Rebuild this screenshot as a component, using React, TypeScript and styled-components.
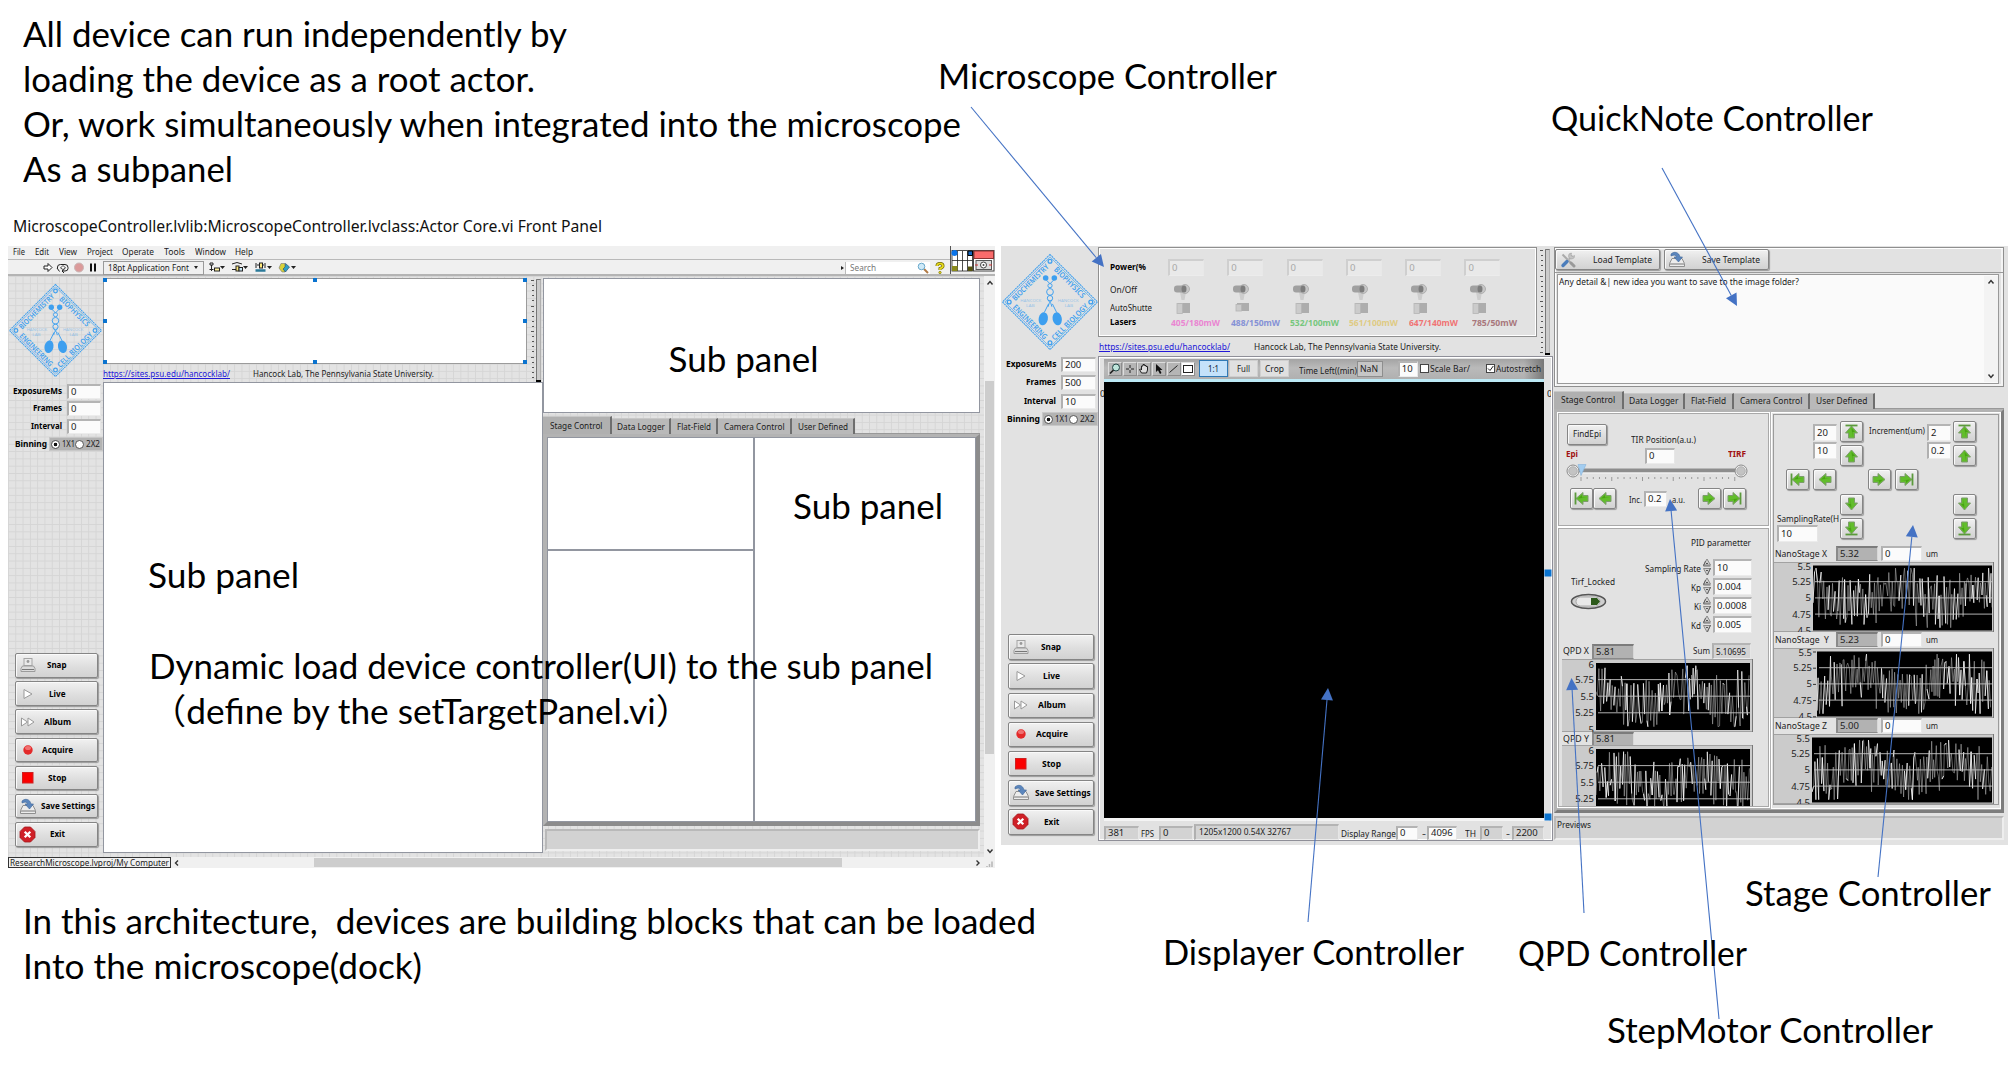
import React, { useLayoutEffect, useRef, useState } from 'react';
import styled, { createGlobalStyle, css } from 'styled-components';

const UI = '"Noto Sans", "Open Sans", "Noto Sans CJK SC", sans-serif';
const SLIDE = 'Lato, "Noto Sans CJK SC", sans-serif';

const Global = createGlobalStyle`
  * { box-sizing: border-box; }
  body { margin: 0; background: #fff; overflow: hidden; }
`;

/* ---------- text that is fitted to a given width ---------- */

const FitBox = styled.span<{ $w: number; $size: number; $bold?: boolean; $color?: string; $ml?: number; $mt?: number }>`
  display: block;
  flex: none;
  width: ${(p) => p.$w}px;
  margin-left: ${(p) => p.$ml ?? 0}px;
  margin-top: ${(p) => p.$mt ?? 0}px;
  font-size: ${(p) => p.$size}px;
  font-weight: ${(p) => (p.$bold ? 700 : 400)};
  color: ${(p) => p.$color ?? '#1c1c1c'};
  white-space: pre;
  line-height: inherit;
`;

const FitInner = styled.span<{ $under?: boolean }>`
  display: inline-block;
  transform-origin: 0 50%;
  text-decoration: ${(p) => (p.$under ? 'underline' : 'none')};
`;

type TProps = {
  w: number;
  size?: number;
  b?: boolean;
  c?: string;
  ml?: number;
  mt?: number;
  u?: boolean;
  children: React.ReactNode;
};

function T({ w, size = 9, b, c, ml, mt, u, children }: TProps) {
  const ref = useRef<HTMLSpanElement>(null);
  const [scale, setScale] = useState(1);
  useLayoutEffect(() => {
    if (!ref.current) return;
    const natural = parseFloat(getComputedStyle(ref.current).width);
    if (natural > 0) setScale(w / natural);
  }, [w, children]);
  return (
    <FitBox $w={w} $size={size} $bold={b} $color={c} $ml={ml} $mt={mt}>
      <FitInner ref={ref} $under={u} style={{ transform: `scaleX(${scale})` }}>
        {children}
      </FitInner>
    </FitBox>
  );
}

/* ---------- slide canvas ---------- */

const Slide = styled.main`
  position: relative;
  width: 2013px;
  height: 1076px;
  overflow: hidden;
  background: #fff;
  font-family: ${UI};
  line-height: 12px;
`;

const Note = styled.div<{ $x: number; $y: number }>`
  position: absolute;
  left: ${(p) => p.$x}px;
  top: ${(p) => p.$y - 35.5}px;
  font-family: ${SLIDE};
  line-height: 45px;
  display: flex;
  flex-direction: column;
`;

const WindowTitle = styled.div`
  position: absolute;
  left: 13px;
  top: 213px;
  line-height: 25px;
`;

const Overlay = styled.svg`
  position: absolute;
  left: 0;
  top: 0;
  pointer-events: none;
`;

/* ---------- shared widgets ---------- */

type Tone = 'white' | 'off' | 'ind' | 'gray';
const toneBg: Record<Tone, string> = { white: '#fbfbfb', off: '#e9e9e9', ind: '#b2b2b2', gray: '#d3d3d3' };

const FieldBox = styled.div<{ $w: number; $h: number; $tone: Tone; $ml: number; $mt: number }>`
  flex: none;
  width: ${(p) => p.$w}px;
  height: ${(p) => p.$h}px;
  margin-left: ${(p) => p.$ml}px;
  margin-top: ${(p) => p.$mt}px;
  background: ${(p) => toneBg[p.$tone]};
  border-style: solid;
  border-width: 2px 1px 1px 2px;
  border-color: ${(p) =>
    p.$tone === 'ind' ? '#7c7c7c #d8d8d8 #8a8a8a #8a8a8a' : p.$tone === 'off' ? '#cfcfcf #e8e8e8 #ececec #cfcfcf' : '#b4b4b4 #e6e6e6 #ececec #b0b0b0'};
  padding-left: 2px;
  display: flex;
  align-items: center;
  white-space: nowrap;
  font-size: 9.5px;
  line-height: 10px;
  color: ${(p) => (p.$tone === 'off' ? '#a8a8a8' : '#222')};
`;

function Field({ w, h = 15, tone = 'white', ml = 0, mt = 0, children }: { w: number; h?: number; tone?: Tone; ml?: number; mt?: number; children?: React.ReactNode }) {
  return (
    <FieldBox $w={w} $h={h} $tone={tone} $ml={ml} $mt={mt}>
      {children}
    </FieldBox>
  );
}

const raised = css`
  background: linear-gradient(#f1f1f1, #dedede 55%, #d2d2d2);
  border: 1px solid #858585;
  border-radius: 2px;
  box-shadow: 1px 1px 1px #9a9a9a, inset 1px 1px 0 #fafafa;
`;

const SideButton = styled.div<{ $h: number }>`
  ${raised};
  height: ${(p) => p.$h}px;
  display: grid;
  grid-template-columns: 23px 1fr;
  align-items: center;
`;

const SideIcon = styled.div`
  display: flex;
  justify-content: center;
`;

const SideLabel = styled.div<{ $wide?: boolean }>`
  padding-right: ${(p) => (p.$wide ? 0 : 22)}px;
  display: flex;
  justify-content: center;
`;

function SnapIcon() {
  return (
    <svg width="16" height="16" viewBox="0 0 16 16">
      <rect x="4" y="1.500" width="8" height="7" fill="#e9e9e9" stroke="#a5a5a5" />
      <circle cx="8" cy="4.500" r="1.400" fill="#999" />
      <path d="M2.500 9h11l1.500 2.500v3H1v-3z" fill="#dcdcdc" stroke="#9b9b9b" />
      <path d="M2 12.500h12" stroke="#777" />
    </svg>
  );
}
function LiveIcon() {
  return (
    <svg width="16" height="12" viewBox="0 0 16 12">
      <path d="M4 1.500l8 4.500-8 4.500z" fill="#fff" stroke="#999" />
    </svg>
  );
}
function AlbumIcon() {
  return (
    <svg width="16" height="12" viewBox="0 0 16 12">
      <path d="M1.500 2l6 4-6 4zM8 2l6 4-6 4z" fill="#fff" stroke="#999" />
    </svg>
  );
}
function AcquireIcon() {
  return (
    <svg width="12" height="12" viewBox="0 0 12 12">
      <circle cx="6" cy="6" r="4.700" fill="#e32a2a" />
      <ellipse cx="6" cy="4" rx="3" ry="2" fill="#f07070" />
    </svg>
  );
}
function StopIcon() {
  return (
    <svg width="12" height="12" viewBox="0 0 12 12">
      <rect x=".5" y=".5" width="10.500" height="10.500" fill="#fb0000" stroke="#c22" />
    </svg>
  );
}
function SaveIcon() {
  return (
    <svg width="18" height="17" viewBox="0 0 18 17">
      <path d="M4 7.500h10l2.500 5v3h-15v-3z" fill="#ececec" stroke="#8f8f8f" />
      <path d="M2 13h14" stroke="#777" />
      <path d="M3 3c3-3 8-2 9 3h2.500L10.500 11 6 6h2.500C8 4 6 3.500 3 5z" fill="#5b86bd" stroke="#3f6799" strokeWidth=".6" />
    </svg>
  );
}
function ExitIcon() {
  return (
    <svg width="17" height="17" viewBox="0 0 17 17">
      <path d="M5.500 1h6L16 5.500v6L11.500 16h-6L1 11.500v-6z" fill="#cf2027" stroke="#a3161c" strokeWidth=".8" />
      <path d="M5.700 5.700l5.600 5.600M11.300 5.700l-5.600 5.600" stroke="#fff" strokeWidth="2.300" />
    </svg>
  );
}
function ToolsIcon() {
  return (
    <svg width="16" height="16" viewBox="0 0 16 16">
      <path d="M2.500 2.500l9 9" stroke="#aaa" strokeWidth="2" />
      <path d="M11 11l3 3" stroke="#999" strokeWidth="3" strokeLinecap="round" />
      <path d="M12.500 3.500L7.500 9" stroke="#b8b8b8" strokeWidth="2" />
      <path d="M14.500 3.500a3 3 0 1 1-3-2.500l-.5 2.500 1.500 1z" fill="#c4c4c4" stroke="#999" strokeWidth=".5" />
      <path d="M7 9.500l-4 4" stroke="#4b7dbb" strokeWidth="3.400" strokeLinecap="round" />
    </svg>
  );
}

const LogoSvg = styled.svg`
  display: block;
  overflow: visible;
`;

function Logo({ size }: { size: number }) {
  const blue = '#3d9fef';
  const edge = { fontSize: 8, fontWeight: 600, fill: blue, textAnchor: 'middle' as const, fontFamily: UI };
  return (
    <LogoSvg width={size} height={size} viewBox="0 0 100 100">
      <path d="M50 .5L99.500 50 50 99.500.5 50z" fill="none" stroke={blue} strokeWidth="1.100" strokeDasharray="2 .6" />
      <path d="M50 3L97 50 50 97 3 50z" fill="none" stroke={blue} strokeWidth=".7" />
      {[[50, 7.5], [92.5, 50], [50, 92.5], [7.5, 50]].map(([x, y]) => (
        <circle key={`${x}-${y}`} cx={x} cy={y} r="2" fill="none" stroke={blue} strokeWidth="1.300" />
      ))}
      <g transform="translate(28 28) rotate(-45)"><text {...edge} y="5" textLength="50" lengthAdjust="spacingAndGlyphs">BIOCHEMISTRY</text></g>
      <g transform="translate(72 28) rotate(45)"><text {...edge} y="5" textLength="42" lengthAdjust="spacingAndGlyphs">BIOPHYSICS</text></g>
      <g transform="translate(28 72) rotate(45)"><text {...edge} y="1" textLength="47" lengthAdjust="spacingAndGlyphs">ENGINEERING</text></g>
      <g transform="translate(72 72) rotate(-45)"><text {...edge} y="1" textLength="50" lengthAdjust="spacingAndGlyphs">CELL BIOLOGY</text></g>
      <g fill={blue}>
        <circle cx="45.500" cy="25" r="2.900" />
        <circle cx="54.500" cy="25" r="2.900" />
        <ellipse cx="43" cy="67.500" rx="4.800" ry="6.800" transform="rotate(12 43 67.500)" />
        <ellipse cx="57.500" cy="67.500" rx="4.800" ry="6.800" transform="rotate(-12 57.500 67.500)" />
      </g>
      <g fill="none" stroke={blue} strokeWidth="1">
        <path d="M46 27l4 4 4-4M44 61l4.500-9M57 61l-4.500-9" />
        <circle cx="50" cy="33" r="2.200" />
        <circle cx="50" cy="39.500" r="3.500" />
        <circle cx="50" cy="46" r="2.800" />
        <path d="M48 48q4 4 4 7M52 48q-4 4-4 7" />
      </g>
      <g fill={blue} opacity=".45" fontSize="4.200" fontFamily={UI}>
        <text x="19" y="50.500" textLength="22" lengthAdjust="spacingAndGlyphs">HANCOCK</text>
        <text x="25" y="55.500" textLength="9" lengthAdjust="spacingAndGlyphs">LAB</text>
        <text x="58" y="50.500" textLength="22" lengthAdjust="spacingAndGlyphs">HANCOCK</text>
        <text x="65" y="55.500" textLength="9" lengthAdjust="spacingAndGlyphs">LAB</text>
      </g>
    </LogoSvg>
  );
}

/* ---------- sidebar ---------- */

const Side = styled.aside<{ $w: number }>`
  flex: none;
  width: ${(p) => p.$w}px;
  display: flex;
  flex-direction: column;
`;
const LogoSlot = styled.div<{ $h: number; $ml: number }>`
  padding-top: 8px;
  height: ${(p) => p.$h}px;
  margin-left: ${(p) => p.$ml}px;
`;
const ParamRow = styled.div<{ $h: number }>`
  height: ${(p) => p.$h}px;
  padding-right: 2px;
  display: flex;
  justify-content: flex-end;
  align-items: flex-start;
`;
const BinRow = styled.div<{ $h: number }>`
  height: ${(p) => p.$h}px;
  display: flex;
  justify-content: flex-end;
  align-items: center;
`;
const BinGroup = styled.div<{ $w: number }>`
  width: ${(p) => p.$w}px;
  height: 100%;
  margin-left: 2px;
  background: #b3b3b3;
  border: 1px solid #c8c8c8;
  display: flex;
  align-items: center;
  padding-left: 1px;
`;
const Radio = styled.i<{ $on?: boolean }>`
  flex: none;
  width: 9px;
  height: 9px;
  border-radius: 50%;
  border: 1px solid #555;
  background: ${(p) => (p.$on ? 'radial-gradient(#111 0 32%, #fff 42%)' : '#fff')};
`;
const ButtonStack = styled.div<{ $gap: number; $ml: number; $w: number; $mb: number }>`
  margin-top: auto;
  margin-bottom: ${(p) => p.$mb}px;
  margin-left: ${(p) => p.$ml}px;
  width: ${(p) => p.$w}px;
  display: flex;
  flex-direction: column;
  gap: ${(p) => p.$gap}px;
`;

const actions = [
  { t: 'Snap', w: 19.5, icon: <SnapIcon /> },
  { t: 'Live', w: 16.5, icon: <LiveIcon /> },
  { t: 'Album', w: 27, icon: <AlbumIcon /> },
  { t: 'Acquire', w: 31, icon: <AcquireIcon /> },
  { t: 'Stop', w: 18.5, icon: <StopIcon /> },
  { t: 'Save Settings', w: 54, icon: <SaveIcon /> },
  { t: 'Exit', w: 15, icon: <ExitIcon /> },
];

type SideProps = { w: number; k: number; logo: number; logoX: number; values: string[]; bottom: number; btnX: number; btnW: number; btnH: number; gap: number; fieldPitch: number };

function Sidebar({ w, k, logo, logoX, values, bottom, btnX, btnW, btnH, gap, fieldPitch }: SideProps) {
  const names: [string, number][] = [['ExposureMs', 49], ['Frames', 29], ['Interval', 31]];
  return (
    <Side $w={w}>
      <LogoSlot $h={logo + 14.5} $ml={logoX}>
        <Logo size={logo} />
      </LogoSlot>
      {names.map(([n, nw], i) => (
        <ParamRow key={n} $h={fieldPitch}>
          <T w={nw * k} size={9.3} b c="#000" mt={1}>{n}</T>
          <Field w={34 * k} h={15} ml={5}>{values[i]}</Field>
        </ParamRow>
      ))}
      <BinRow $h={14 * k}>
        <T w={32 * k} size={9.3} b c="#000">Binning</T>
        <BinGroup $w={54 * k}>
          <Radio $on />
          <T w={13 * k} ml={2}>1X1</T>
          <Radio />
          <T w={14 * k} ml={2}>2X2</T>
        </BinGroup>
      </BinRow>
      <ButtonStack $gap={gap} $ml={btnX} $w={btnW} $mb={bottom}>
        {actions.map((a) => (
          <SideButton key={a.t} $h={btnH}>
            <SideIcon>{a.icon}</SideIcon>
            <SideLabel $wide={a.t === 'Save Settings'}>
              <T w={a.w * k} size={9.3} b c="#000">{a.t}</T>
            </SideLabel>
          </SideButton>
        ))}
      </ButtonStack>
    </Side>
  );
}

/* ---------- ruler gauge beside the top panels ---------- */

function Ruler({ h }: { h: number }) {
  const n = Math.floor(h / 5.1);
  return (
    <svg width="11" height={h}>
      {Array.from({ length: n + 1 }, (_, i) => (
        <rect key={i} x={i % 5 === 0 ? 0 : 1} y={Math.round(i * 5.1 + 1)} width={i % 5 === 0 ? 3 : 2} height="1" fill="#555" />
      ))}
      <rect x="5.500" y=".5" width="4" height={h - 1} fill="#cbcbcb" stroke="#b0b0b0" />
      <path d={`M5.500 ${h}V.5h4`} stroke="#777" fill="none" />
      <rect x="5" y={h - 2} width="5" height="2" fill="#000" />
    </svg>
  );
}

/* ---------- tabs ---------- */

const TabRow = styled.div`
  display: flex;
  align-items: flex-end;
  height: 18px;
`;
const Tab = styled.div<{ $w: number; $on?: boolean }>`
  flex: none;
  width: ${(p) => p.$w}px;
  height: ${(p) => (p.$on ? 18 : 16)}px;
  background: ${(p) => (p.$on ? '#b0b0b0' : '#b9b9b9')};
  border-right: 2px solid #6e6e6e;
  border-top: 1px solid #c8c8c8;
  display: flex;
  justify-content: center;
  align-items: center;
`;
const tabs = [['Stage Control', 52.5], ['Data Logger', 48], ['Flat-Field', 34], ['Camera Control', 60.5], ['User Defined', 50]] as const;

function Tabs({ widths, k }: { widths: number[]; k: number }) {
  return (
    <TabRow>
      {tabs.map(([t, w], i) => (
        <Tab key={t} $w={widths[i]} $on={i === 0}>
          <T w={w * k}>{t}</T>
        </Tab>
      ))}
    </TabRow>
  );
}

/* ---------- left window ---------- */

const EditorWindow = styled.section`
  position: absolute;
  left: 8px;
  top: 246px;
  width: 987px;
  height: 622px;
  display: flex;
  flex-direction: column;
`;
const Header = styled.header`
  display: flex;
  height: 30px;
  background: #f0f0f0;
  border-bottom: 2px solid #b4b4b4;
`;
const Bars = styled.div`
  width: 943px;
  border-right: 1px solid #555;
`;
const MenuBar = styled.nav`
  height: 14px;
  display: flex;
  align-items: center;
  padding: 0 0 2px 4.5px;
  border-bottom: 1px solid #b9b9b9;
`;
const ToolBar = styled.div`
  height: 14px;
  display: flex;
  align-items: center;
  padding: 1px 0 0 34px;
`;
const FontBox = styled.div`
  width: 101px;
  height: 14px;
  margin-left: 6px;
  border: 1px solid #9a9a9a;
  display: flex;
  align-items: center;
  justify-content: space-between;
  padding: 0 5px 0 4px;
`;
const Caret = styled.i`
  border: 2px solid transparent;
  border-top: 3px solid #222;
  border-bottom: 0;
`;
const SearchBox = styled.div`
  width: 85px;
  height: 12px;
  background: #fff;
  border-left: 1px solid #bbb;
  display: flex;
  align-items: center;
  justify-content: space-between;
  padding: 0 1px 0 4px;
`;
const SearchMark = styled.i`
  margin: 0 1px 0 auto;
  border: 2px solid transparent;
  border-left: 3px solid #222;
  border-right: 0;
`;
const HelpSlot = styled.div`
  width: 20px;
  display: flex;
  justify-content: center;
`;
const PaneIcons = styled.div`
  padding-top: 4px;
`;
const Body = styled.div`
  display: flex;
  height: 581px;
`;
const GridCanvas = styled.div`
  width: 976px;
  display: flex;
  background-color: #e3e3e3;
  background-image: linear-gradient(#d5d5d5 1px, transparent 1px), linear-gradient(90deg, #d5d5d5 1px, transparent 1px);
  background-size: 7.3px 7.3px;
`;
const VScroll = styled.div`
  width: 11px;
  background: #f0f0f0;
  display: flex;
  flex-direction: column;
  align-items: center;
  padding: 3px 0 2px;
`;
const VThumb = styled.div`
  width: 9px;
  height: 373px;
  margin: 94px 0 auto;
  background: #cdcdcd;
`;
const HBar = styled.footer`
  height: 11px;
  display: flex;
  align-items: center;
  background: #f0f0f0;
`;
const ProjectTag = styled.div`
  width: 163px;
  height: 11px;
  border: 1px solid #333;
  padding-left: 1px;
  display: flex;
  align-items: center;
  line-height: 9px;
`;
const HThumb = styled.div`
  width: 528px;
  height: 9px;
  margin: 0 auto 0 135px;
  background: #cdcdcd;
`;
const CenterCol = styled.div<{ $w: number }>`
  flex: none;
  width: ${(p) => p.$w}px;
  display: flex;
  flex-direction: column;
`;
const TopBlock = styled.div<{ $h: number }>`
  height: ${(p) => p.$h}px;
  display: flex;
`;
const TopLeft = styled.div<{ $w: number; $pt: number }>`
  width: ${(p) => p.$w}px;
  padding-top: ${(p) => p.$pt}px;
`;
const RulerSlot = styled.div<{ $ml: number }>`
  padding-top: 3px;
  margin-left: ${(p) => p.$ml}px;
`;
const SubPanel = styled.div<{ $h: number }>`
  position: relative;
  height: ${(p) => p.$h}px;
  background: #fff;
  border: 1px solid #9b9b9b;
`;
const BlankPanel = styled.div<{ $w?: number; $h: number }>`
  ${(p) => (p.$w ? `width: ${p.$w}px;` : '')}
  height: ${(p) => p.$h}px;
  background: #fff;
  border: 1px solid #9296a0;
`;
const Handle = styled.i<{ $x: string; $y: string; $s?: number }>`
  position: absolute;
  left: ${(p) => p.$x};
  top: ${(p) => p.$y};
  width: ${(p) => p.$s ?? 4}px;
  height: ${(p) => p.$s ?? 4}px;
  transform: translate(-50%, -50%);
  background: #0a73cf;
`;
const LinkRow = styled.div<{ $h: number }>`
  height: ${(p) => p.$h}px;
  display: flex;
  align-items: center;
`;
const TabBody = styled.div<{ $h: number }>`
  height: ${(p) => p.$h}px;
  border-style: solid;
  border-width: 3px 4px 4px 4px;
  border-color: #b3b3b3 #8c8c8c #8c8c8c #b3b3b3;
  box-shadow: inset -1px -1px 0 #aaa, 0 -1px 0 #999;
  background: #b3b3b3;
  display: flex;
`;
const StatusWell = styled.div<{ $h: number; $mt: number; $ml?: number }>`
  height: ${(p) => p.$h}px;
  margin-top: ${(p) => p.$mt}px;
  margin-left: ${(p) => p.$ml ?? 0}px;
  background: #d2d2d2;
  border-style: solid;
  border-width: 2px;
  border-color: #b9b9b9 #eee #eee #b9b9b9;
  padding: 1px 0 0 1px;
`;
const RightCol = styled.div<{ $w: number; $pt: number }>`
  flex: none;
  width: ${(p) => p.$w}px;
  padding-top: ${(p) => p.$pt}px;
`;
const SplitCol = styled.div`
  width: 207px;
`;
const TabGap = styled.div<{ $h: number }>`
  height: ${(p) => p.$h}px;
`;
const Chev = ({ d }: { d: string }) => (
  <svg width="8" height="8" viewBox="0 0 8 8"><path d={d} fill="none" stroke="#333" strokeWidth="1.400" /></svg>
);

const menus: [string, number, number][] = [
  ['File', 12, 0], ['Edit', 14, 10], ['View', 18, 10], ['Project', 26, 10],
  ['Operate', 32, 9], ['Tools', 21, 10], ['Window', 31, 10], ['Help', 18, 9],
];

function ToolbarIcons() {
  return (
    <svg width="55" height="13" viewBox="0 0 55 13">
      <path d="M2 5h4V2.500L10 6.500 6 10.500V8H2z" fill="#fff" stroke="#222" />
      <path d="M15.500 7.500V6q0-2.500 3-2.500h4.500q3 0 3 3v1q0 2.500-3 2.500H20M17.500 10.500L15 7M20 10l2.500-2M20 10l2 2" fill="none" stroke="#222" />
      <path d="M18.500 7l2.500-2.500L23.500 7 21 8.500z" fill="#fff" stroke="#222" strokeWidth=".8" />
      <circle cx="37" cy="6.500" r="4.500" fill="#db9a9a" stroke="#c9b5b5" />
      <path d="M49 2.500v8M53 2.500v8" stroke="#111" strokeWidth="2" />
    </svg>
  );
}
function LayoutIcons() {
  return (
    <svg width="92" height="13" viewBox="0 0 92 13">
      <g stroke="#222" fill="none">
        <path d="M6 2h3v2H6zM7.500 4v6M5.500 8.500h4" />
        <rect x="10.500" y="7" width="5" height="3" fill="#fff3a0" />
        <path d="M28 3l5-1.500L38 3M28 8.500h4" />
        <rect x="32" y="5" width="3" height="5" fill="#ffe97a" />
        <rect x="35" y="6.500" width="3.500" height="3.500" fill="#c7e6f5" />
        <path d="M52 2v5M61 2v5M53 4h7" />
        <rect x="55.500" y="2" width="3" height="5" fill="#ffe97a" />
        <path d="M51.500 9.500h10" stroke="#2b7a9a" strokeWidth="2.500" />
      </g>
      <path d="M77 2.500h4v2l3 2-3 2.500v2h-3l-3-4z" fill="#d8d23a" stroke="#777" strokeWidth=".6" />
      <path d="M81.500 2.500l4 3.500-4 5-2.500-3 2-2z" fill="#2f9fc5" stroke="#246" strokeWidth=".6" />
      {[18, 41, 65, 89].map((x) => <path key={x} d={`M${x - 2} 5h5l-2.500 3z`} fill="#222" />)}
    </svg>
  );
}
function ConnectorPane() {
  return (
    <svg width="44" height="23" viewBox="0 0 44 23">
      <rect x="1" y=".5" width="20.500" height="20.500" fill="#fff" stroke="#222" strokeWidth=".8" />
      <path d="M6.500 1v20M11.500 1v20M16.500 1v20M1 10.500h20.500" stroke="#222" strokeWidth=".8" />
      <path d="M17 1h4.500v4.500H17z" fill="#1566c0" stroke="#000" />
      <path d="M1 16h5.500v5H1z" fill="#8a8a1c" /><path d="M17 16.500h4.500V21H17z" fill="#55520f" />
      <circle cx="3.500" cy="3" r="3" fill="#0a74ea" />
      <rect x="22.500" y=".5" width="20.500" height="20.500" fill="#fff" stroke="#444" />
      <rect x="23" y="1" width="19.500" height="7.500" fill="#f96b6b" stroke="#833" />
      <rect x="25" y="10.500" width="15.500" height="9" fill="#ddd" stroke="#555" />
      <circle cx="32.500" cy="15" r="3" fill="#fff" stroke="#444" /><circle cx="32.500" cy="15" r="1" fill="#444" />
      <path d="M24 15h3M38 15h3" stroke="#c33" />
    </svg>
  );
}

function LeftWindow() {
  return (
    <EditorWindow>
      <Header>
        <Bars>
          <MenuBar>
            {menus.map(([t, w, ml]) => <T key={t} w={w} ml={ml} size={8.6}>{t}</T>)}
          </MenuBar>
          <ToolBar>
            <ToolbarIcons />
            <FontBox><T w={81} size={8.8}>18pt Application Font</T><Caret /></FontBox>
            <LayoutIcons />
            <SearchMark />
            <SearchBox>
              <T w={26} size={8.6} c="#777">Search</T>
              <svg width="12" height="12" viewBox="0 0 12 12">
                <path d="M7 7l4 4" stroke="#b07a45" strokeWidth="2" />
                <circle cx="4.500" cy="4.500" r="3.300" fill="#cfeaf8" stroke="#6aa9cc" />
              </svg>
            </SearchBox>
            <HelpSlot>
              <svg width="10" height="12" viewBox="0 0 10 12">
                <path d="M2 4q0-2.500 3-2.500T8 4q0 1.500-3 2.500v1.500" fill="none" stroke="#6d6500" strokeWidth="3" />
                <path d="M2 4q0-2.500 3-2.500T8 4q0 1.500-3 2.500v1.500" fill="none" stroke="#e8dc1e" strokeWidth="1.700" />
                <circle cx="5" cy="10.500" r="1.200" fill="#e8dc1e" stroke="#6d6500" strokeWidth=".6" />
              </svg>
            </HelpSlot>
          </ToolBar>
        </Bars>
        <PaneIcons><ConnectorPane /></PaneIcons>
      </Header>
      <Body>
        <GridCanvas>
          <Sidebar w={95} k={1} logo={93} logoX={1} values={['0', '0', '0']} bottom={10.5} btnX={7} btnW={83} btnH={24.5} gap={3.65} fieldPitch={17.85} />
          <CenterCol $w={440}>
            <TopBlock $h={106}>
              <TopLeft $w={424} $pt={2}>
                <SubPanel $h={86}>
                  {['0.5px', '50%', 'calc(100% - 1px)'].map((x) =>
                    ['0.5px', '50%', 'calc(100% - 1px)'].map((y) =>
                      x === '50%' && y === '50%' ? null : <Handle key={x + y} $x={x} $y={y} />,
                    ),
                  )}
                </SubPanel>
                <LinkRow $h={20}>
                  <T w={127} u c="#2318d8">https://sites.psu.edu/hancocklab/</T>
                  <T w={181} ml={23}>Hancock Lab, The Pennsylvania State University.</T>
                </LinkRow>
              </TopLeft>
              <RulerSlot $ml={4}><Ruler h={103} /></RulerSlot>
            </TopBlock>
            <BlankPanel $h={470.5} />
          </CenterCol>
          <RightCol $w={437} $pt={2}>
            <BlankPanel $h={135} />
            <TabGap $h={3} />
            <Tabs widths={[69, 59, 47, 74, 63]} k={1} />
            <TabBody $h={392}>
              <SplitCol>
                <BlankPanel $h={113} />
                <BlankPanel $h={272} />
              </SplitCol>
              <BlankPanel $w={222} $h={385} />
            </TabBody>
            <StatusWell $h={22} $mt={3} $ml={2} />
          </RightCol>
        </GridCanvas>
        <VScroll>
          <Chev d="M1.500 5.500L4 2.500l2.500 3" />
          <VThumb />
          <Chev d="M1.500 2.500L4 5.500l2.500-3" />
        </VScroll>
      </Body>
      <HBar>
        <ProjectTag><T w={159} size={9}>ResearchMicroscope.lvproj/My Computer</T></ProjectTag>
        <Chev d="M7 1.500L4.500 4 7 6.500" />
        <HThumb />
        <Chev d="M2.500 1.500L5 4 2.500 6.500" />
        <svg width="13" height="10" viewBox="0 0 13 10">
          <path d="M5 8v1M7.500 6v3M10 3.500V9" stroke="#b5b5b5" strokeWidth="1.500" />
        </svg>
      </HBar>
    </EditorWindow>
  );
}

/* ---------- running window ---------- */

const RunWindow = styled.section`
  position: absolute;
  left: 1001px;
  top: 246px;
  width: 1007px;
  height: 599px;
  display: flex;
  background: #e2e2e2;
`;
const PowerPanel = styled.div`
  height: 90px;
  border: 1px solid #8f8f8f;
  box-shadow: inset -1px -1px 0 #fff, inset 1px 1px 0 #fff;
  padding: 9px 0 0 11px;
  display: grid;
  grid-template-columns: 58px repeat(6, 59.3px);
  grid-template-rows: 20px 25px 12px 18px;
  align-items: center;
`;
const ToggleSlot = styled.div`
  padding-left: 4px;
  height: 13px;
`;
const lasers: [string, string, number, number][] = [
  ['405/180mW', '#ea86d2', 49, 3], ['488/150mW', '#8591d6', 49, 4], ['532/100mW', '#76c77d', 49, 3],
  ['561/100mW', '#dfcb84', 49, 3], ['647/140mW', '#f07474', 49, 4], ['785/50mW', '#a8777c', 45, 8],
];
function RockerTop() {
  return (
    <svg width="20" height="17" viewBox="0 0 20 17">
      <path d="M8 9h6l-1.500 8h-3z" fill="#cdcdcd" />
      <ellipse cx="13" cy="6" rx="4.500" ry="4.500" fill="#c6c6c6" stroke="#b0b0b0" />
      <rect x="2" y="2.500" width="11" height="7" rx="3" fill="#a0a0a0" />
      <ellipse cx="12" cy="6" rx="2.500" ry="3.500" fill="#7c7c7c" />
    </svg>
  );
}
function RockerBottom({ flat }: { flat?: boolean }) {
  return (
    <svg width="20" height="12" viewBox="0 0 20 12">
      <rect x="6" y="1" width="12" height={flat ? 8 : 10} fill="#adadad" />
      <rect x="5" y={flat ? 2.5 : 1.5} width="5.500" height={flat ? 6.5 : 10} fill="#cbcbcb" stroke="#b5b5b5" strokeWidth=".8" />
    </svg>
  );
}

const DisplayPanel = styled.div`
  position: relative;
  width: 455px;
  height: 485px;
  border: 1px solid #8f8f98;
  box-shadow: inset 1px 1px 0 #fff, inset -1px -1px 0 #fff;
  padding: 2px 0 0 5px;
`;
const ViewTools = styled.div`
  width: 440px;
  height: 20px;
  padding: 0 0 0 4px;
  display: flex;
  align-items: center;
  background: linear-gradient(90deg, transparent 420px, #777), linear-gradient(#a4a4a4, #bababa 45%, #b0b0b0);
`;
const ToolKey = styled.div<{ $white?: boolean }>`
  width: 14px;
  height: 14px;
  margin-right: 0.7px;
  background: ${(p) => (p.$white ? '#fff' : '#b5b5b5')};
  border: 1px solid #8d8d8d;
  border-top-color: #ddd;
  border-left-color: #ddd;
`;
const ZoomKey = styled.div<{ $on?: boolean }>`
  width: 29px;
  height: 17px;
  margin-left: ${(p) => (p.$on ? 3 : 1.3)}px;
  background: ${(p) => (p.$on ? '#c4e2fa' : '#e0e0e0')};
  border: 1px solid ${(p) => (p.$on ? '#2f79b5' : '#cfcfcf')};
  display: flex;
  align-items: center;
  justify-content: center;
`;
const NanBox = styled.div`
  width: 26px;
  height: 16px;
  background: #c6c6c6;
  border: 1px solid #8e8e8e;
  display: flex;
  align-items: center;
  padding-left: 2px;
`;
const Check = styled.div<{ $ml: number }>`
  flex: none;
  width: 9px;
  height: 9px;
  margin-left: ${(p) => p.$ml}px;
  background: #fff;
  border: 1px solid #444;
  display: flex;
`;
const CyanLine = styled.div`
  width: 440px;
  height: 3.5px;
  background: #bdeaf6;
`;
const ImageView = styled.div`
  width: 440px;
  height: 436px;
  background: #000;
`;
const ReadoutBar = styled.div`
  width: 445px;
  height: 21.5px;
  display: flex;
  align-items: flex-end;
  overflow: hidden;
  border-top: 3px solid #f4f4f4;
`;
const AxisZero = styled.span<{ $x: number }>`
  position: absolute;
  left: ${(p) => p.$x}px;
  top: 31px;
  width: 4px;
  overflow: hidden;
  font-size: 9px;
  color: #222;
`;

function ViewToolbar() {
  const g = { fill: 'none', stroke: '#222', strokeWidth: 1 };
  return (
    <ViewTools>
      <ToolKey><svg width="12" height="12"><circle cx="7" cy="4.500" r="3.500" fill="#bfe6dc" stroke="#244" /><path d="M4.500 7L1 10.500" stroke="#222" strokeWidth="1.700" /></svg></ToolKey>
      <ToolKey><svg width="12" height="12"><path d="M6 2v3M6 7v3M2 6h3M7 6h3" {...g} /></svg></ToolKey>
      <ToolKey><svg width="12" height="12"><path d="M3.500 10L1.500 6.500l1-.5 1 1V3h1.500V1.500h1.500v1H8V3.500h1.500V7L8.500 10z" fill="#ddd" stroke="#222" /></svg></ToolKey>
      <ToolKey><svg width="12" height="12"><path d="M3 1v8l2-1.700L7 11l1.500-1L7 7h2.500z" fill="#111" /></svg></ToolKey>
      <ToolKey><svg width="12" height="12"><path d="M1.500 9.500l8-7" {...g} /></svg></ToolKey>
      <ToolKey $white><svg width="12" height="12"><rect x="1.500" y="2.500" width="9" height="7" {...g} /></svg></ToolKey>
      <ZoomKey $on><T w={11} c="#123">1:1</T></ZoomKey>
      <ZoomKey><T w={13}>Full</T></ZoomKey>
      <ZoomKey><T w={19}>Crop</T></ZoomKey>
      <T w={58} ml={10} mt={4}>Time Left((min)</T>
      <NanBox><T w={18}>NaN</T></NanBox>
      <Field w={20} h={16} ml={15}>10</Field>
      <Check $ml={2} />
      <T w={40} ml={1}>Scale Bar/</T>
      <Check $ml={16}><svg width="7" height="7"><path d="M1 3.500l2 2L6.300 1" fill="none" stroke="#222" /></svg></Check>
      <T w={45} ml={1}>Autostretch</T>
    </ViewTools>
  );
}

function CenterRun() {
  return (
    <CenterCol $w={456}>
      <TopBlock $h={109.5}>
        <TopLeft $w={439} $pt={1}>
          <PowerPanel>
            <T w={36} b c="#000">Power(%</T>
            {lasers.map(([n]) => <Field key={n} w={36} h={17} tone="off">0</Field>)}
            <T w={27} mt={1}>On/Off</T>
            {lasers.map(([n]) => <ToggleSlot key={n}><RockerTop /></ToggleSlot>)}
            <T w={42}>AutoShutte</T>
            {lasers.map(([n], i) => <ToggleSlot key={n}><RockerBottom flat={i === 1} /></ToggleSlot>)}
            <T w={26} b c="#000" mt={-3}>Lasers</T>
            {lasers.map(([n, c, w, ml]) => <T key={n} w={w} b c={c} ml={ml}>{n}</T>)}
          </PowerPanel>
          <LinkRow $h={20}>
            <T w={131} ml={1} u c="#2318d8">https://sites.psu.edu/hancocklab/</T>
            <T w={187} ml={24}>Hancock Lab, The Pennsylvania State University.</T>
          </LinkRow>
        </TopLeft>
        <RulerSlot $ml={3}><Ruler h={106} /></RulerSlot>
      </TopBlock>
      <DisplayPanel>
        <ViewToolbar />
        <CyanLine />
        <ImageView />
        <ReadoutBar>
          <Field w={35} h={14} tone="gray">381</Field>
          <T w={13} ml={2}>FPS</T>
          <Field w={34} h={14} tone="gray" ml={5}>0</Field>
          <Field w={145} h={16} tone="gray" ml={1}><T w={92} size={9.5} ml={1}>1205x1200 0.54X 32767</T></Field>
          <T w={55} ml={2}>Display Range</T>
          <Field w={22} h={14}>0</Field>
          <T w={4} ml={4}>-</T>
          <Field w={30} h={14} ml={1}>4096</Field>
          <T w={11} ml={8}>TH</T>
          <Field w={23} h={14} ml={4} tone="gray">0</Field>
          <T w={4} ml={3}>-</T>
          <Field w={32} h={14} ml={2} tone="gray">2200</Field>
        </ReadoutBar>
        <AxisZero $x={1}>0</AxisZero>
        <AxisZero $x={448}>0</AxisZero>
        <Handle $x="449px" $y="216px" $s={7} />
        <Handle $x="449px" $y="460px" $s={7} />
      </DisplayPanel>
    </CenterCol>
  );
}

/* quick note */
const NotePanel = styled.div`
  height: 140px;
  border: 1px solid #8f8f8f;
  box-shadow: inset 1px 1px 0 #fff, inset -2px -2px 0 #f4f4f4;
`;
const TemplateBar = styled.div`
  height: 25px;
  border-bottom: 1px solid #9a9a9a;
  padding-top: 1px;
  display: flex;
  gap: 4px;
`;
const TemplateButton = styled.div`
  ${raised};
  width: 105px;
  height: 21px;
  display: grid;
  grid-template-columns: 24px 1fr;
  align-items: center;
`;
const CenterSlot = styled.div`
  display: flex;
  justify-content: center;
`;
const NoteArea = styled.div`
  height: 110px;
  margin: 1px 4px 0 2px;
  background: #fafafa;
  border: 1px solid #999;
  display: flex;
  justify-content: space-between;
  padding: 1px 0 1px 1px;
`;
const NoteScroll = styled.div`
  width: 14px;
  background: #f3f3f3;
  display: flex;
  flex-direction: column;
  justify-content: space-between;
  align-items: center;
  padding: 2px 0;
`;

/* stage tab */
const panelEdge = css`
  background: #e2e2e2;
  border: 1px solid #fff;
  outline: 1px solid #a9a9a9;
  outline-offset: -2px;
`;
const LeftStack = styled.div`
  width: 213px;
  height: 396px;
  display: flex;
  flex-direction: column;
`;
const TirPanel = styled.div`
  ${panelEdge};
  height: 115px;
`;
const PidPanel = styled.div`
  ${panelEdge};
  height: 281px;
  overflow: hidden;
`;
const TirHead = styled.div`
  height: 51px;
  padding-top: 1px;
  display: flex;
`;
const TirEpi = styled.div`
  width: 66px;
  padding: 10px 0 0 9px;
`;
const FindButton = styled.div`
  ${raised};
  width: 40px;
  height: 21px;
  display: flex;
  align-items: center;
  justify-content: center;
`;
const TirValue = styled.div`
  width: 104px;
  padding: 20px 0 0 7px;
`;
const TirEnd = styled.div`
  padding-top: 34px;
`;
const StepRow = styled.div`
  display: flex;
  align-items: center;
  height: 22px;
  padding-left: 12px;
  margin-top: 4px;
`;
const ArrowKey = styled.div<{ $ml?: number }>`
  ${raised};
  flex: none;
  width: 23px;
  height: 21px;
  margin-left: ${(p) => p.$ml ?? 0}px;
  display: flex;
  align-items: center;
  justify-content: center;
`;
function Arrow({ dir, end }: { dir: 'l' | 'r' | 'u' | 'd'; end?: boolean }) {
  const rot = { r: 0, d: 90, l: 180, u: 270 }[dir];
  return (
    <svg width="17" height="17" viewBox="0 0 17 17">
      <g transform={`rotate(${rot} 8.5 8.5)`}>
        <path d="M2 5.500h5V2.500L14 8.500 7 14.500v-3H2z" fill="#62bd2c" stroke="#7d9d6c" strokeWidth="1" />
        <path d="M3 9.500h5v2.500l4-3.500z" fill="#48a314" />
        {end && <path d="M14.500 2.500v12" stroke="#5b9a3c" strokeWidth="1.800" />}
      </g>
    </svg>
  );
}
const BlockSvg = styled.svg`
  display: block;
`;
function Slider() {
  return (
    <BlockSvg width="210" height="20" viewBox="0 0 210 20">
      <rect x="15" y="4.500" width="168" height="4" fill="#8d8d8d" />
      <rect x="15" y="8.500" width="168" height="1" fill="#f5f5f5" />
      {[15, 183].map((x) => (
        <g key={x}>
          <circle cx={x} cy="7" r="6" fill="#ededed" stroke="#8b8b8b" />
          <circle cx={x} cy="7" r="4.300" fill="#c3c3c3" stroke="#999" strokeWidth=".6" />
        </g>
      ))}
      <path d="M20 .5h8L23 11.500z" fill="#a3cdf0" stroke="#86b3dc" strokeWidth=".6" />
      {Array.from({ length: 26 }, (_, i) => (
        <rect key={i} x={22.5 + i * 6.15} y="13" width="1" height={i % 5 === 0 ? 4 : 2} fill="#999" />
      ))}
    </BlockSvg>
  );
}
const PidBlock = styled.div`
  height: 116px;
  display: flex;
  justify-content: space-between;
  padding: 9px 17px 0 13px;
`;
const LockCol = styled.div`
  padding-top: 39px;
`;
const LockKey = styled.svg`
  display: block;
  margin: 5px 0 0 -1px;
`;
const PidCol = styled.div`
  width: 110px;
`;
const PidRow = styled.div`
  height: 19px;
  display: flex;
  justify-content: flex-end;
  align-items: center;
`;
const PidHead = styled.div`
  display: flex;
  height: 21px;
  justify-content: flex-end;
  padding-right: 1px;
`;
function Spinner() {
  return (
    <svg width="12" height="18" viewBox="0 0 12 18">
      <path d="M6 1l3.500 6H2.500zM2.500 10.500h7L6 17z" fill="#cfcfcf" stroke="#8a8a8a" />
      <path d="M4.500 3l-2 5h7M9.500 10l-3 7" stroke="#5e5e5e" fill="none" strokeWidth=".9" />
      <path d="M5 5.500h2M5 12.500h2" stroke="#555" />
    </svg>
  );
}
const MeterRow = styled.div<{ $h: number; $pl: number }>`
  height: ${(p) => p.$h}px;
  padding-left: ${(p) => p.$pl}px;
  display: flex;
  align-items: center;
`;
const ChartBox = styled.div<{ $ml: number }>`
  margin-left: ${(p) => p.$ml}px;
`;

type ChartProps = { w: number; h: number; px: number; pw: number; py: number; ph: number; ticks: string[]; step: number; seed: number; dash?: boolean };

/* noisy signal: wide random swings around a slow drift, a few long flat slopes */
function trace(seed: number, pw: number, range: number) {
  let s = seed * 7919 + 13;
  const rnd = () => {
    s = (s * 1664525 + 1013904223) % 4294967296;
    return s / 4294967296;
  };
  const pts: [number, number][] = [];
  let x = 0;
  let up = false;
  while (x <= pw) {
    const sway = Math.sin(x / 14 + seed) * 0.13;
    const reach = 0.08 + rnd() * (rnd() < 0.45 ? 0.4 : 0.24);
    const v = Math.min(0.96, Math.max(0.04, 0.48 + (up ? -reach : reach) + sway));
    pts.push([x, v * range]);
    if (rnd() < 0.85) up = !up;
    x += 0.7 + rnd() * 1.1;
  }
  const bright = pts.slice(1).map((p, i) => ({ a: pts[i], b: p, on: rnd() < 0.22 })).filter((q) => q.on);
  return {
    all: pts.map((p) => p.map((n) => n.toFixed(1)).join(',')).join(' '),
    bright: bright.map((q) => `M${q.a[0].toFixed(1)} ${q.a[1].toFixed(1)}L${q.b[0].toFixed(1)} ${q.b[1].toFixed(1)}`).join(''),
  };
}

function Chart({ w, h, px, pw, py, ph, ticks, step, seed, dash }: ChartProps) {
  const wave = trace(seed, pw, step * 4);
  return (
    <BlockSvg width={w} height={h}>
      <rect width={w} height={h} fill="#cbcbcb" />
      <path d={`M0 .5h${w}`} stroke="#a2a2a2" />
      <path d={`M${w - 0.5} 0v${h - 0.5}H0`} stroke="#777" fill="none" />
      <rect x={px} y={py} width={pw} height={ph} fill="#000" />
      <svg x={px} y={py} width={pw} height={ph}>
        <polyline points={wave.all} fill="none" stroke="#a2a2a2" strokeWidth=".62" />
        <path d={wave.bright} stroke="#fff" strokeWidth=".8" />
      </svg>
      {ticks.map((t, i) => (
        <g key={t}>
          {i > 0 && i < 4 && <path d={`M${px + 2} ${py + i * step}h${pw - 2}`} stroke="#c4c4c4" strokeWidth=".9" />}
          <text x={px - (dash ? 5 : 2)} y={py + i * step + (i === 0 ? 4.5 : 3.5)} textAnchor="end" fontSize="9.500" fontFamily={UI} fill="#222">{t}</text>
          {dash && <path d={`M${px - 4} ${py + i * step + 0.5}h3`} stroke="#333" />}
        </g>
      ))}
    </BlockSvg>
  );
}

const NanoOuter = styled.div`
  width: 230px;
  height: 397px;
  margin-left: auto;
  background: #e2e2e2;
  border: 1px solid #fff;
  padding: 1px;
`;
const NanoPanel = styled.div`
  height: 391px;
  border: 1px solid #9b9b9b;
  overflow: hidden;
`;
const JogGrid = styled.div`
  height: 131px;
  padding: 6px 0 0 12px;
  display: grid;
  grid-template-columns: 27px 27px 28px 27px 32px 26px 24px;
  grid-template-rows: repeat(5, 24.4px);
`;
const JogCell = styled.div<{ $c: number; $r: number; $span?: number }>`
  grid-column: ${(p) => p.$c} / span ${(p) => p.$span ?? 1};
  grid-row: ${(p) => p.$r};
`;
const SampleCell = styled.div`
  grid-column: 1 / span 3;
  grid-row: 4 / span 2;
  margin-left: -9px;
  padding-top: 19px;
`;
const jogs: [number, number, 'l' | 'r' | 'u' | 'd', boolean][] = [
  [3, 1, 'u', true], [7, 1, 'u', true], [3, 2, 'u', false], [7, 2, 'u', false],
  [1, 3, 'l', true], [2, 3, 'l', false], [4, 3, 'r', false], [5, 3, 'r', true],
  [3, 4, 'd', false], [7, 4, 'd', false], [3, 5, 'd', true], [7, 5, 'd', true],
];
const StageBody = styled(TabBody)`
  border-width: 3px;
  border-color: #b3b3b3 #7d7d7d #7d7d7d #b3b3b3;
`;

function StagePanels() {
  const five = ['5.5', '5.25', '5', '4.75', '4.5'];
  const six = ['6', '5.75', '5.5', '5.25', '5'];
  return (
    <StageBody $h={404}>
      <LeftStack>
        <TirPanel>
          <TirHead>
            <TirEpi>
              <FindButton><T w={28}>FindEpi</T></FindButton>
              <T w={12} b c="#a11212" mt={3} ml={-1}>Epi</T>
            </TirEpi>
            <TirValue>
              <T w={65}>TIR Position(a.u.)</T>
              <Field w={30} h={16} ml={14} mt={2}>0</Field>
            </TirValue>
            <TirEnd><T w={18} b c="#a11212">TIRF</T></TirEnd>
          </TirHead>
          <Slider />
          <StepRow>
            <ArrowKey><Arrow dir="l" end /></ArrowKey>
            <ArrowKey><Arrow dir="l" /></ArrowKey>
            <T w={13} ml={13} mt={3}>Inc.</T>
            <Field w={23} h={16} ml={2}>0.2</Field>
            <T w={13} ml={5} mt={3}>a.u.</T>
            <ArrowKey $ml={13}><Arrow dir="r" /></ArrowKey>
            <ArrowKey $ml={2}><Arrow dir="r" end /></ArrowKey>
          </StepRow>
        </TirPanel>
        <PidPanel>
          <PidBlock>
            <LockCol>
              <T w={44}>Tirf_Locked</T>
              <LockKey width="38" height="17" viewBox="0 0 38 17">
                <ellipse cx="18.500" cy="8.500" rx="17" ry="7" fill="#cfcfcf" stroke="#555" strokeWidth="1.500" />
                <rect x="6" y="4" width="24" height="9" rx="4.500" fill="#e9e9e9" stroke="#aaa" />
                <path d="M21 5h6l3 3.500-3 3.500h-6z" fill="#2d5a1b" />
              </LockKey>
            </LockCol>
            <PidCol>
              <PidHead><T w={60}>PID parametter</T></PidHead>
              {([['Sampling Rate', 56, '10'], ['Kp', 10, '0.004'], ['Ki', 7, '0.0008'], ['Kd', 10, '0.005']] as const).map(([n, w, v]) => (
                <PidRow key={n}>
                  <T w={w} mt={3}>{n}</T>
                  <Spinner />
                  <Field w={39} h={17}>{v}</Field>
                </PidRow>
              ))}
            </PidCol>
          </PidBlock>
          <MeterRow $h={15} $pl={5}>
            <T w={26}>QPD X</T>
            <Field w={42} h={15} ml={3} tone="ind">5.81</Field>
            <T w={17} ml={59}>Sum</T>
            <Field w={39} h={16} ml={2} tone="gray"><T w={30} size={9.5}>5.10695</T></Field>
          </MeterRow>
          <ChartBox $ml={4}><Chart w={191} h={73.5} px={34} pw={154} py={4} ph={67} step={16.6} ticks={six} seed={11} /></ChartBox>
          <MeterRow $h={13} $pl={5}>
            <T w={26}>QPD Y</T>
            <Field w={42} h={14} ml={3} tone="ind">5.81</Field>
          </MeterRow>
          <ChartBox $ml={4}><Chart w={191} h={74} px={34} pw={154} py={4} ph={67} step={16.6} ticks={six} seed={47} /></ChartBox>
        </PidPanel>
      </LeftStack>
      <NanoOuter>
        <NanoPanel>
          <JogGrid>
            {jogs.map(([c, r, dir, end]) => (
              <JogCell key={`${c}${r}`} $c={c} $r={r}><ArrowKey><Arrow dir={dir} end={end} /></ArrowKey></JogCell>
            ))}
            <JogCell $c={2} $r={1}><Field w={24} h={17} mt={3}>20</Field></JogCell>
            <JogCell $c={2} $r={2}><Field w={24} h={17} mt={-3}>10</Field></JogCell>
            <JogCell $c={4} $r={1} $span={2}><T w={56} ml={1} mt={4}>Increment(um)</T></JogCell>
            <JogCell $c={6} $r={1}><Field w={24} h={17} mt={3}>2</Field></JogCell>
            <JogCell $c={6} $r={2}><Field w={24} h={17} mt={-3}>0.2</Field></JogCell>
            <SampleCell>
              <T w={62}>SamplingRate(H</T>
              <Field w={41} h={17}>10</Field>
            </SampleCell>
          </JogGrid>
          {([['NanoStage X', '5.32', 39, 179, 5, false], ['NanoStage  Y', '5.23', 43, 175, 77, true], ['NanoStage Z', '5.00', 38, 180, 133, false]] as const).map(([n, v, px, pw, seed, dash], i) => (
            <React.Fragment key={n}>
              <MeterRow $h={i === 0 ? 16 : 15.5} $pl={1}>
                <T w={n.includes('Y') ? 54 : 52}>{n}</T>
                <Field w={42} h={15} ml={n.includes('Y') ? 7 : 9} tone="ind">{v}</Field>
                <Field w={41} h={15} ml={3}>0</Field>
                <T w={12} ml={4}>um</T>
              </MeterRow>
              <ChartBox $ml={0}><Chart w={220} h={70.5} px={px} pw={pw} py={3.5} ph={65} step={16.2} ticks={five} seed={seed} dash={dash} /></ChartBox>
            </React.Fragment>
          ))}
        </NanoPanel>
      </NanoOuter>
    </StageBody>
  );
}

function RightWindow() {
  return (
    <RunWindow>
      <Sidebar w={97} k={1.03} logo={96} logoX={1} values={['200', '500', '10']} bottom={10.3} btnX={7} btnW={86} btnH={25.6} gap={3.55} fieldPitch={18.5} />
      <CenterRun />
      <RightCol $w={450} $pt={1}>
        <NotePanel>
          <TemplateBar>
            <TemplateButton><CenterSlot><ToolsIcon /></CenterSlot><T w={59} ml={13}>Load Template</T></TemplateButton>
            <TemplateButton><CenterSlot><SaveIcon /></CenterSlot><T w={58} ml={13}>Save Template</T></TemplateButton>
          </TemplateBar>
          <NoteArea>
            <T w={240}>Any detail &amp;| new idea you want to save to the image folder?</T>
            <NoteScroll>
              <Chev d="M1.500 5.500L4 2.500l2.500 3" />
              <Chev d="M1.500 2.500L4 5.500l2.500-3" />
            </NoteScroll>
          </NoteArea>
        </NotePanel>
        <TabGap $h={3.5} />
        <Tabs widths={[70, 61, 49, 76, 65]} k={1.03} />
        <StagePanels />
        <StatusWell $h={24} $mt={3.5}>
          <T w={34}>Previews</T>
        </StatusWell>
      </RightCol>
    </RunWindow>
  );
}

/* ---------- annotations ---------- */

const notes: { x: number; y: number; lines: [string, number, number?][] }[] = [
  { x: 23, y: 46.5, lines: [['All device can run independently by', 544], ['loading the device as a root actor.', 512], ['Or, work simultaneously when integrated into the microscope', 938], ['As a subpanel', 210]] },
  { x: 938, y: 88.5, lines: [['Microscope Controller', 339]] },
  { x: 1550.5, y: 130.5, lines: [['QuickNote Controller', 322]] },
  { x: 668.5, y: 371.5, lines: [['Sub panel', 150]] },
  { x: 793, y: 518.5, lines: [['Sub panel', 150]] },
  { x: 148, y: 587, lines: [['Sub panel', 151]] },
  { x: 149, y: 678, lines: [['Dynamic load device controller(UI) to the sub panel', 784], ['（define by the setTargetPanel.vi）', 540, 2]] },
  { x: 23, y: 933.5, lines: [['In this architecture,  devices are building blocks that can be loaded', 1013], ['Into the microscope(dock)', 399]] },
  { x: 1163, y: 964.5, lines: [['Displayer Controller', 301]] },
  { x: 1518, y: 965.5, lines: [['QPD Controller', 229]] },
  { x: 1745, y: 905, lines: [['Stage Controller', 246]] },
  { x: 1607, y: 1042.5, lines: [['StepMotor Controller', 326]] },
];

const arrows = [
  [971, 107, 1104, 267], [1662, 168, 1737, 306], [1308, 922, 1328, 688],
  [1584, 913, 1571.5, 678], [1719, 1019, 1670, 499], [1878, 877, 1913, 525],
];

export default function App() {
  return (
    <>
      <Global />
      <Slide>
        <WindowTitle><T w={589} size={16.5} c="#111">MicroscopeController.lvlib:MicroscopeController.lvclass:Actor Core.vi Front Panel</T></WindowTitle>
        <LeftWindow />
        <RightWindow />
        <Overlay width="2013" height="1076">
          {arrows.map(([x1, y1, x2, y2]) => {
            const a = Math.atan2(y2 - y1, x2 - x1);
            const bx = x2 - Math.cos(a) * 12;
            const by = y2 - Math.sin(a) * 12;
            const nx = Math.sin(a) * 6;
            const ny = -Math.cos(a) * 6;
            return (
              <g key={x1}>
                <path d={`M${x1} ${y1}L${bx} ${by}`} stroke="#4472c4" strokeWidth="1.100" />
                <path d={`M${x2} ${y2}L${bx + nx} ${by + ny}L${bx - nx} ${by - ny}z`} fill="#4472c4" />
              </g>
            );
          })}
        </Overlay>
        {notes.map((n) => (
          <Note key={`${n.x}-${n.y}`} $x={n.x} $y={n.y}>
            {n.lines.map(([t, w, ml]) => <T key={t} w={w} ml={ml} size={35} c="#000">{t}</T>)}
          </Note>
        ))}
      </Slide>
    </>
  );
}
